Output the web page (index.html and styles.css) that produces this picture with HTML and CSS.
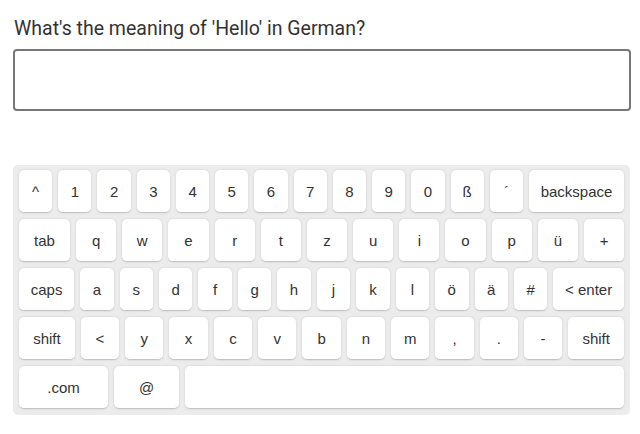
FILE: index.html
```html
<!DOCTYPE html>
<html>
<head>
<meta charset="utf-8">
<link rel="stylesheet" href="styles.css">
</head>
<body>
<div class="page">
  <h1 class="question">What's the meaning of 'Hello' in German?</h1>
  <input class="answer" type="text">
  <div class="keyboard">
    <div class="row">
      <div class="key">^</div><div class="key">1</div><div class="key">2</div><div class="key">3</div><div class="key">4</div><div class="key">5</div><div class="key">6</div><div class="key">7</div><div class="key">8</div><div class="key">9</div><div class="key">0</div><div class="key">ß</div><div class="key">´</div><div class="key fn">backspace</div>
    </div>
    <div class="row">
      <div class="key fn">tab</div><div class="key">q</div><div class="key">w</div><div class="key">e</div><div class="key">r</div><div class="key">t</div><div class="key">z</div><div class="key">u</div><div class="key">i</div><div class="key">o</div><div class="key">p</div><div class="key">ü</div><div class="key">+</div>
    </div>
    <div class="row">
      <div class="key fn">caps</div><div class="key">a</div><div class="key">s</div><div class="key">d</div><div class="key">f</div><div class="key">g</div><div class="key">h</div><div class="key">j</div><div class="key">k</div><div class="key">l</div><div class="key">ö</div><div class="key">ä</div><div class="key">#</div><div class="key fn">&lt; enter</div>
    </div>
    <div class="row">
      <div class="key fn">shift</div><div class="key">&lt;</div><div class="key">y</div><div class="key">x</div><div class="key">c</div><div class="key">v</div><div class="key">b</div><div class="key">n</div><div class="key">m</div><div class="key">,</div><div class="key">.</div><div class="key">-</div><div class="key fn">shift</div>
    </div>
    <div class="row">
      <div class="key com">.com</div><div class="key at">@</div><div class="key space">&nbsp;</div>
    </div>
  </div>
</div>
</body>
</html>
```

FILE: styles.css
```css
html, body {
  margin: 0;
  padding: 0;
  background: #fff;
}

.page {
  width: 618px;
  margin-left: 13px;
  padding-top: 17px;
}

.question {
  margin: 0 0 0 1px;
  font-family: Roboto, "Liberation Sans", sans-serif;
  font-weight: 400;
  font-size: 19.5px;
  line-height: 24px;
  color: #333;
}

.answer {
  display: block;
  box-sizing: border-box;
  width: 618px;
  height: 62px;
  margin: 8px 0 0 0;
  border: 2px solid #777;
  border-radius: 4px;
  background: #fff;
  outline: none;
}

.keyboard {
  margin-top: 54px;
  box-sizing: border-box;
  width: 617px;
  padding: 5px 6px 6px;
  background: #ececec;
  border-radius: 5px;
  display: flex;
  flex-direction: column;
  gap: 6px;
  font-family: "Liberation Sans", Arial, sans-serif;
  font-size: 15px;
  color: #333;
}

.row {
  display: flex;
  gap: 6px;
}

.key {
  box-sizing: border-box;
  flex-grow: 1;
  width: 20px;
  height: 43px;
  padding: 5px;
  display: flex;
  align-items: center;
  justify-content: center;
  background: #fff;
  border-radius: 5px;
  border-bottom: 1px solid #c4c4c4;
  box-shadow: 0 0 3px -1px rgba(0, 0, 0, 0.3);
  white-space: nowrap;
}

.key.fn {
  width: auto;
}

.key.com {
  flex-grow: 0;
  width: 89px;
}

.key.at {
  flex-grow: 0;
  width: 65px;
}

.key.space {
  width: auto;
}
```
